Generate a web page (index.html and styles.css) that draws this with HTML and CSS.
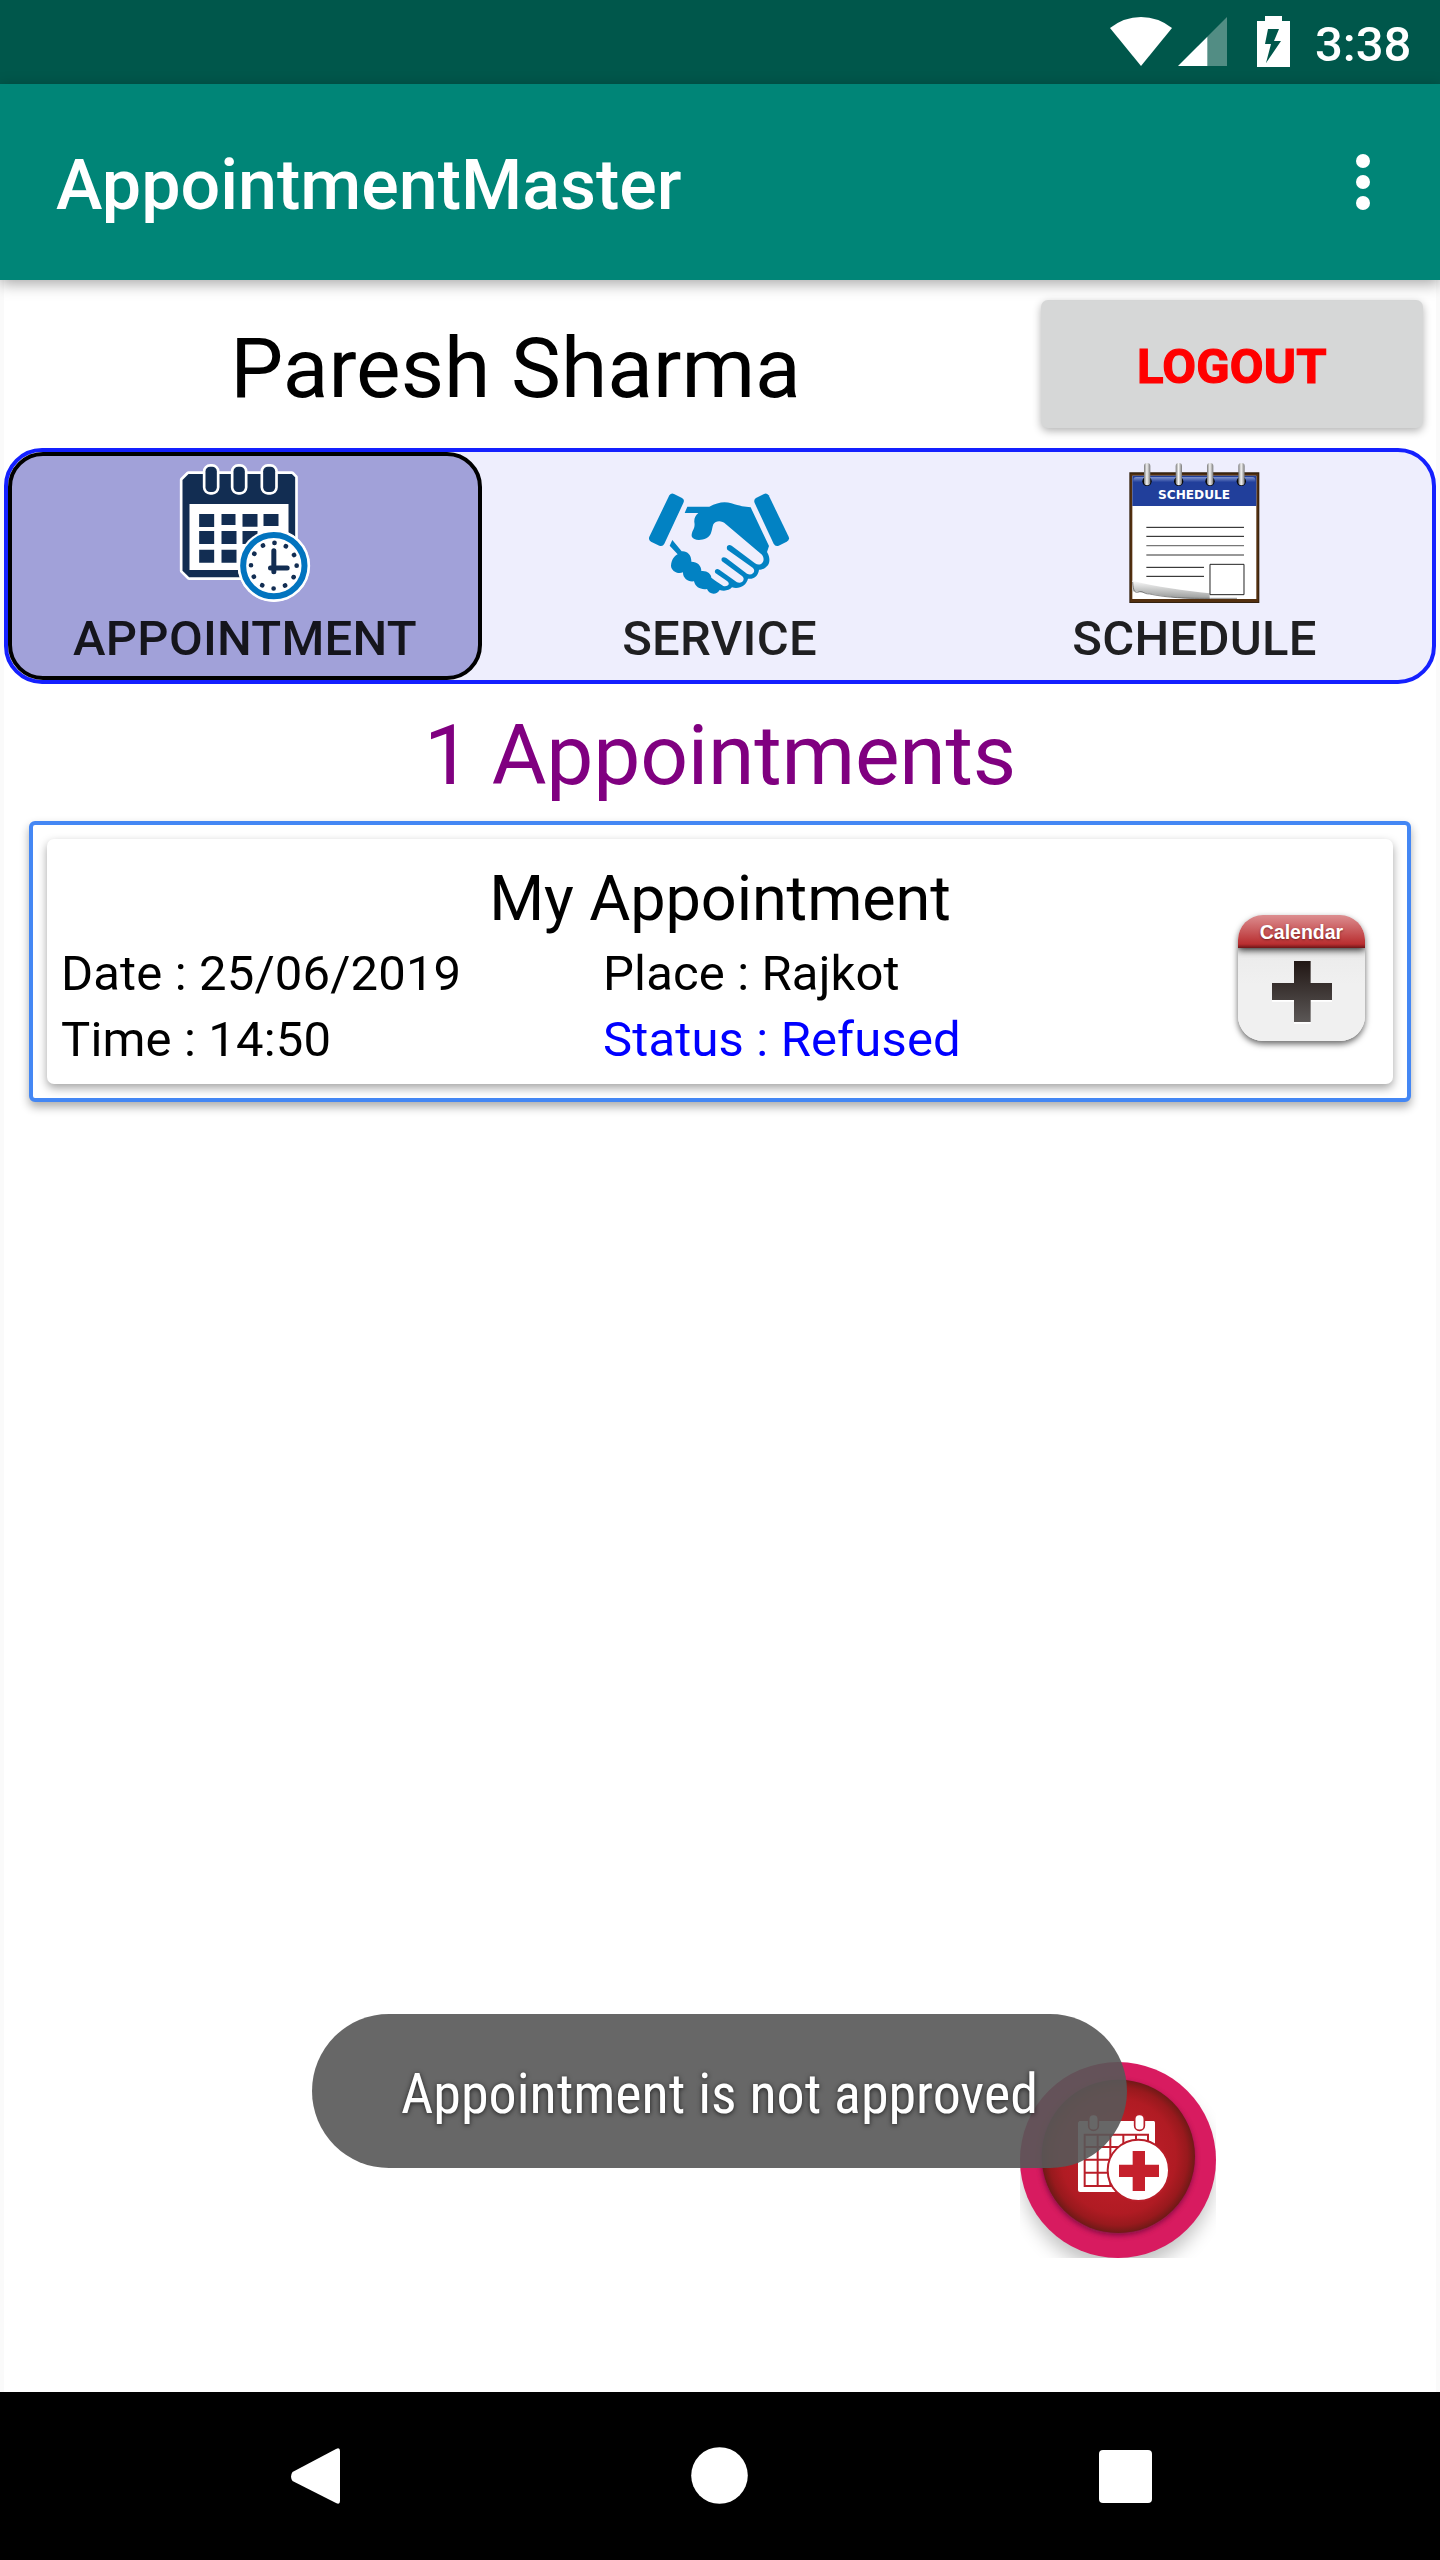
FILE: index.html
```html
<!DOCTYPE html>
<html lang="en">
<head>
<meta charset="utf-8">
<title>AppointmentMaster</title>
<link rel="stylesheet" href="styles.css">
</head>
<body>
<div class="status-bar">
  <svg class="status-icons" viewBox="0 0 180 51" width="180" height="51">
    <path d="M0 12Q14 1 31 1T62 12L31 50Z" fill="#fff"/>
    <path d="M117 1V50H97V21Z" fill="#fff" opacity=".32"/>
    <path d="M68 50L97.300 20.700V50Z" fill="#fff"/>
    <path fill-rule="evenodd" d="M155 0h17v5h8v46h-33V5h8zM158 13l-3 15h6l-5 19 15-22h-7l5-12z" fill="#fff"/>
  </svg>
  <span class="clock">3:38</span>
</div>
<header class="app-bar">
  <h1 class="app-title">AppointmentMaster</h1>
  <svg class="overflow" viewBox="0 0 14 56" width="14" height="56" fill="#fff"><circle cx="7" cy="7" r="7"/><circle cx="7" cy="28" r="7"/><circle cx="7" cy="49" r="7"/></svg>
</header>
<main class="content">
  <div class="user-row">
    <div class="user-name">Paresh Sharma</div>
    <button class="logout">LOGOUT</button>
  </div>
  <nav class="tabs">
    <div class="tab tab-active">
      <svg class="tab-icon" viewBox="80 30 410 432" width="137" height="144">
        <g fill="#122d52" stroke="#fff" stroke-width="16" stroke-linejoin="round" paint-order="stroke">
          <path d="M114 72H424L434 82V382H116L96 362V90Z"/>
        </g>
        <circle cx="370" cy="347" r="109" fill="#fff"/>
        <path d="M117 162H414V360H117Z" fill="#fff"/>
        <g fill="#122d52" stroke="#fff" stroke-width="16" paint-order="stroke">
          <rect x="165" y="50" width="34" height="76" rx="14"/><rect x="249" y="50" width="34" height="76" rx="14"/><rect x="338" y="50" width="36" height="76" rx="14"/>
        </g>
        <path fill="#122d52" d="M146 192h45v39h-45zM213 192h42v33h-42zM276 192h45v38h-45zM339 192h45v36h-45zM146 243h45v39h-45zM213 243h45v39h-45zM276 243h45v39h-45zM146 299h45v39h-45zM213 299h45v39h-45z"/>
        <circle cx="370" cy="347" r="108" fill="#fff"/>
        <circle cx="370" cy="347" r="92" fill="#fff" stroke="#0274bf" stroke-width="18"/>
        <circle cx="370" cy="347" r="68.500" fill="none" stroke="#122d52" stroke-width="14" stroke-linecap="round" stroke-dasharray="0.010 35.857"/>
        <path d="M370 302V365M360 354H410" fill="none" stroke="#122d52" stroke-width="15" stroke-linecap="round"/>
      </svg>
      <span class="tab-label">APPOINTMENT</span>
    </div>
    <div class="tab">
      <svg class="tab-icon" viewBox="54 -30 432 432" width="144" height="144">
        <g fill="#0282c3">
          <path d="M118 76Q124 68 132 72L156 84Q165 89 160 99L103 221Q98 231 88 227L63 215Q54 210 58 200Z"/>
          <path d="M416 76Q410 68 402 72L378 84Q370 89 374 99L431 221Q436 231 446 227L470 215Q480 210 476 200Z"/>
          <path d="M172 110H238C262 97 284 93 304 100C330 108 344 111 362 112L417 228L411 246C421 262 421 282 409 290C402 297 394 299 387 299C385 318 370 329 354 326C349 347 328 358 306 352C298 362 282 364 269 360C262 374 238 376 231 357C213 360 196 352 192 334C174 337 158 324 159 307C143 314 123 302 123 287C124 270 132 259 143 253L119 227L127 210L155 244C171 242 185 255 184 275C202 275 214 286 214 303C231 301 244 312 244 323L257 333L280 348C292 351 304 342 290 332L256 309C251 300 260 293 268 299L321 337C334 343 349 329 336 318L276 274C271 264 279 258 289 264L351 311C366 319 380 304 368 293L292 239C287 229 295 221 305 227L375 280C393 292 409 272 396 254L287 162C276 151 257 151 250 163C244 179 247 196 229 205C212 213 190 212 185 199C184 181 197 176 193 157C192 145 196 137 205 129H164Z"/>
        </g>
      </svg>
      <span class="tab-label">SERVICE</span>
    </div>
    <div class="tab">
      <svg class="tab-icon" viewBox="50 30 404 432" width="134.670" height="144">
        <defs>
          <linearGradient id="blue" x2="0" y2="1"><stop offset="0" stop-color="#7f93cf"/><stop offset=".4" stop-color="#213f9b"/></linearGradient>
          <linearGradient id="curl" x1=".15" y1="1" x2=".3" y2="0"><stop offset="0" stop-color="#8f9190"/><stop offset="1" stop-color="#fff"/></linearGradient>
          <linearGradient id="ring"><stop offset="0" stop-color="#777"/><stop offset=".45" stop-color="#f4f4f4"/><stop offset="1" stop-color="#777"/></linearGradient>
        </defs>
        <path d="M57 67H447V459H57Z" fill="#33210f"/>
        <path d="M60 71H444V456H60Z" fill="#54300f"/>
        <path d="M66 77H438V447H66Z" fill="#fff"/>
        <path d="M66 77H438V168H66Z" fill="#213f9b"/>
        <path d="M69 90Q69 81 78 81H426Q435 81 435 90V120H69Z" fill="url(#blue)"/>
        <path d="M66 392C140 412 220 420 298 430V446H240C180 444 120 430 66 424Z" fill="url(#curl)"/>
        <path d="M67 396C69 425 74 428 82 427C100 420 96 432 118 432C160 441 210 446 300 445H380" fill="none" stroke="#555" stroke-width="2"/>
        <path d="M108 232H401M108 259H401M108 352H281M108 379H281" stroke="#111" stroke-width="3"/>
        <path d="M108 287H401M108 315H401" stroke="#777" stroke-width="4"/>
        <path d="M299 343H401V434H299Z" fill="#fff" stroke="#222" stroke-width="3"/>
        <g fill="#080808"><circle cx="110" cy="94" r="14"/><circle cx="205" cy="94" r="14"/><circle cx="299" cy="94" r="14"/><circle cx="393" cy="94" r="14"/></g>
        <g fill="url(#ring)"><rect x="101" y="39" width="19" height="67" rx="9"/><rect x="196" y="39" width="19" height="67" rx="9"/><rect x="290" y="39" width="19" height="67" rx="9"/><rect x="384" y="39" width="19" height="67" rx="9"/></g>
        <text class="schedule-text" x="251" y="147" text-anchor="middle" textLength="216" lengthAdjust="spacingAndGlyphs">SCHEDULE</text>
      </svg>
      <span class="tab-label">SCHEDULE</span>
    </div>
  </nav>
  <h2 class="count">1 Appointments</h2>
  <section class="card-frame">
    <article class="card">
      <h3 class="card-title">My Appointment</h3>
      <div class="details">
        <span>Date : 25/06/2019</span><span>Place : Rajkot</span>
        <span>Time : 14:50</span><span class="refused">Status : Refused</span>
      </div>
      <div class="add-calendar">
        <div class="cal-head">Calendar</div>
        <svg class="cal-plus" viewBox="0 0 182 188" width="60.670" height="62.670">
          <defs><linearGradient id="plus" x2="0" y2="1"><stop offset="0" stop-color="#211714"/><stop offset="1" stop-color="#5b5756"/></linearGradient></defs>
          <path d="M66 5h50v66h66v51h-66v66H66v-66H0V71h66z" fill="#fff"/>
          <path d="M66 0h50v66h66v51h-66v66H66v-66H0V66h66z" fill="url(#plus)"/>
        </svg>
      </div>
    </article>
  </section>
</main>
<div class="fab">
  <svg viewBox="60 66 588 588" width="196" height="196">
    <defs>
      <radialGradient id="disc"><stop offset="0" stop-color="#c8202d"/><stop offset=".75" stop-color="#b01b23"/><stop offset=".9" stop-color="#98191d"/><stop offset="1" stop-color="#6f1a16"/></radialGradient>
      <filter id="soft" x="-20%" y="-20%" width="140%" height="140%"><feGaussianBlur stdDeviation="9"/></filter>
      <filter id="wide" x="-30%" y="-30%" width="160%" height="160%"><feGaussianBlur stdDeviation="28"/></filter>
    </defs>
    <circle cx="354" cy="400" r="285" fill="#000" opacity=".25" filter="url(#wide)"/>
    <circle cx="354" cy="360" r="294" fill="#d81b60"/>
    <circle cx="354" cy="356" r="228" fill="#5d0b36" opacity=".85" filter="url(#soft)"/>
    <circle cx="355" cy="349" r="230" fill="url(#disc)"/>
    <path d="M238 243H461Q465 243 465 248V456H240Q234 456 234 450V248Z" fill="#fff"/>
    <g fill="#fff" stroke="#b91e29" stroke-width="5"><rect x="266" y="223" width="29" height="48" rx="14"/><rect x="404" y="223" width="29" height="48" rx="14"/></g>
    <path d="M254 284H444V438H254ZM293 284V438M331 284V438M370 284V438M408 284V438M254 321H444M254 359H444M254 398H444" fill="none" stroke="#b91e29" stroke-width="6"/>
    <circle cx="415" cy="391" r="92" fill="#fff" stroke="#b91e29" stroke-width="6"/>
    <path d="M398 333h37v41h42v37h-42v42h-37v-42h-41v-37h41z" fill="#c5202c"/>
  </svg>
</div>
<div class="toast"><span class="toast-text">Appointment is not approved</span></div>
<footer class="nav-bar">
  <svg viewBox="0 0 861 58" width="861" height="58" fill="#fff">
    <path d="M1.500 25L45 2Q49 0 49 4V54Q49 58 45 56L1.500 34Q-1.500 29.500 1.500 25Z"/>
    <circle cx="428.500" cy="28.500" r="28.300"/>
    <rect x="808" y="3" width="53" height="53" rx="4"/>
  </svg>
</footer>
</body>
</html>
```
FILE: styles.css
```css
* { box-sizing: border-box; }
body {
  margin: 0;
  width: 1440px;
  height: 2560px;
  display: flex;
  flex-direction: column;
  position: relative;
  overflow: hidden;
  background: #fafafa;
  font-family: Roboto, "Liberation Sans", sans-serif;
  color: #000;
}
h1, h2, h3 { margin: 0; font-weight: 400; }
.status-bar {
  height: 84px;
  background: #00574b;
  display: flex;
  justify-content: flex-end;
  padding: 16px 28px 0 0;
  gap: 25px;
}
.clock { color: #fff; font-size: 49px; font-weight: 500; line-height: 58px; width: 97px; white-space: nowrap; }
.app-bar {
  height: 196px;
  background: #008577;
  display: flex;
  align-items: center;
  justify-content: space-between;
  padding: 6px 70px 0 56px;
  position: relative;
  z-index: 1;
  box-shadow: 0 4px 14px rgba(0, 0, 0, .34);
}
.app-title { color: #fff; font-size: 70px; font-weight: 500; line-height: 82px; white-space: nowrap; }
.overflow { margin-bottom: 6px; }
.content { flex: 1; margin: 0 4px; background: #fff; display: flex; flex-direction: column; }
.user-row { height: 168px; display: flex; align-items: center; padding-right: 13px; }
.user-name { flex: 1; font-size: 84px; line-height: 100px; text-align: center; padding: 10px 14px 0 0; }
.logout {
  width: 382px;
  height: 128px;
  border: 0;
  border-radius: 7px;
  padding: 5px 0 0;
  background: #d6d7d7;
  color: #f00;
  font: 700 49px/60px Roboto, sans-serif;
  letter-spacing: .2px;
  -webkit-text-stroke: 1.2px #f00;
  box-shadow: 0 3px 8px rgba(0, 0, 0, .3);
}
.tabs {
  height: 236px;
  display: flex;
  border: 4px solid #1420ff;
  border-radius: 38px;
  background: #eeeefd;
}
.tab {
  flex: 1;
  display: flex;
  flex-direction: column;
  align-items: center;
  border: 4px solid transparent;
  border-radius: 35px;
  padding-top: 4px;
}
.tab-active { flex: 0 0 474px; background: #a1a1d9; border-color: #000; }
.tab-icon { flex: none; }
.tab-label { margin-top: 5px; font-size: 49px; line-height: 60px; font-weight: 500; letter-spacing: .25px; color: rgba(0, 0, 0, .87); }
.schedule-text { font: 700 37px "DejaVu Sans", sans-serif; fill: #fff; }
.count { height: 137px; padding-top: 22px; font-size: 84px; line-height: 100px; letter-spacing: -.2px; text-align: center; color: #800080; }
.card-frame {
  width: 1382px;
  height: 281px;
  margin-left: 25px;
  padding: 14px;
  background: #fff;
  border: 4px solid #4487f4;
  border-radius: 6px;
  box-shadow: 0 5px 10px rgba(0, 0, 0, .32);
}
.card {
  height: 245px;
  border-radius: 7px;
  background: #fff;
  box-shadow: 0 4px 10px rgba(0, 0, 0, .36);
  display: grid;
  grid-template-columns: 1191px 127px;
  grid-template-rows: 76px 47px 1fr;
  padding-top: 21px;
}
.card-title { grid-column: 1 / 3; grid-row: 1; width: 1346px; text-align: center; font-size: 63px; line-height: 78px; letter-spacing: -.1px; }
.details {
  grid-column: 1;
  grid-row: 2 / 4;
  display: grid;
  grid-template-columns: 542px 1fr;
  grid-auto-rows: 66px;
  padding-left: 14px;
  padding-top: 5px;
  font-size: 49px;
  line-height: 66px;
  letter-spacing: .15px;
  white-space: nowrap;
}
.refused { color: #00f; }
.add-calendar {
  grid-column: 2;
  grid-row: 1 / 4;
  width: 127px;
  height: 126px;
  margin-top: 55px;
  border-radius: 25px;
  background: linear-gradient(#e6e6e6, #f0f0f0 55%);
  box-shadow: 0 3px 6px rgba(0, 0, 0, .6);
  overflow: hidden;
  display: flex;
  flex-direction: column;
  align-items: center;
}
.cal-head {
  width: 127px;
  height: 33px;
  flex: none;
  background: linear-gradient(#dc8e90, #b92e30 88%, #6d1517);
  box-shadow: 0 2px 7px rgba(0, 0, 0, .85);
  color: #fff;
  font: 700 19.500px/35px "Liberation Sans", sans-serif;
  text-align: center;
  text-shadow: 0 1px 2px rgba(90, 20, 20, .7);
}
.cal-plus { margin: 13px 0 0 1px; flex: none; }
.fab { position: absolute; left: 1020px; top: 2062px; width: 196px; height: 196px; overflow: hidden; }
.fab svg { display: block; }
.toast {
  position: absolute;
  left: 312px;
  top: 2014px;
  width: 815px;
  height: 154px;
  border-radius: 77px;
  background: rgba(88, 88, 88, .91);
  display: flex;
  align-items: center;
  justify-content: center;
}
.toast-text {
  color: #fff;
  font-size: 56px;
  font-stretch: condensed;
  line-height: 66px;
  padding-top: 6px;
  white-space: nowrap;
  text-shadow: 0 1px 5px rgba(0, 0, 0, .7);
}
.nav-bar { height: 168px; background: #000; padding: 55px 0 0 291px; }
```
